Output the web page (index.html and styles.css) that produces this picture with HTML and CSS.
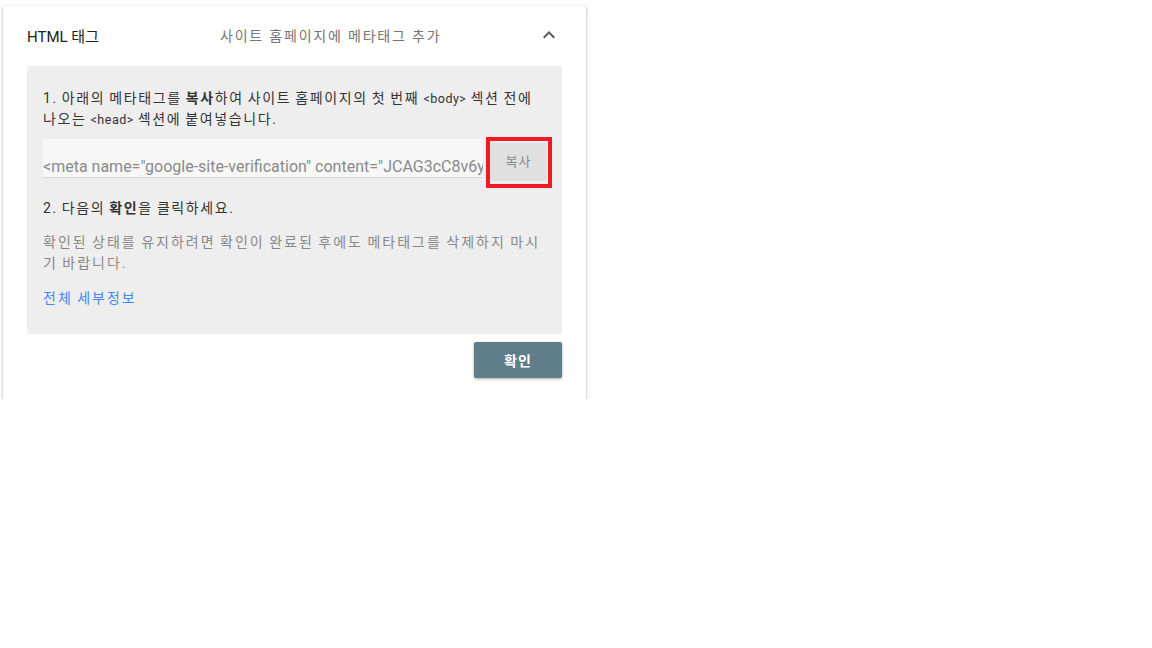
FILE: index.html
```html
<!DOCTYPE html>
<html lang="ko">
<head>
    <meta charset="UTF-8">
    <meta name="viewport" content="width=device-width, initial-scale=1.0">
    <title>HTML 태그</title>
    <link rel="stylesheet" href="styles.css">
</head>
<body>
    <div class="card">
        <div class="card-header">
            <span class="card-title">HTML 태그</span>
            <span class="card-subtitle">사이트 홈페이지에 메타태그 추가</span>
            <svg class="chevron" width="24" height="24" viewBox="0 0 24 24">
                <path d="M7.41 15.41L12 10.83l4.59 4.58L18 14l-6-6-6 6z" fill="#555"/>
            </svg>
        </div>

        <div class="steps">
            <p class="step">1. 아래의 메타태그를 <b>복사</b>하여 사이트 홈페이지의 첫 번째 <code>&lt;body&gt;</code> 섹션 전에<br>나오는 <code>&lt;head&gt;</code> 섹션에 붙여넣습니다.</p>

            <div class="copy-row">
                <div class="meta-field">&lt;meta name="google-site-verification" content="JCAG3cC8v6yQk2mXpL0tVbNq9rW" /&gt;</div>
                <span class="mark">
                    <button class="copy-btn">복사</button>
                </span>
            </div>

            <p class="step">2. 다음의 <b>확인</b>을 클릭하세요.</p>
            <p class="note">확인된 상태를 유지하려면 확인이 완료된 후에도 메타태그를 삭제하지 마시<br>기 바랍니다.</p>
            <a class="details" href="#">전체 세부정보</a>
        </div>

        <div class="actions">
            <button class="confirm-btn">확인</button>
        </div>
    </div>
</body>
</html>
```

FILE: styles.css
```css
body {
    margin: 0;
    background: #fff;
    font-family: Roboto, "Noto Sans CJK KR", sans-serif;
    color: #212121;
}

.card {
    width: 583px;
    margin: 6px 0 0 3px;
    background: #fff;
    box-shadow: 0 1px 3px rgba(0, 0, 0, 0.35);
    padding-bottom: 21px;
}

.card-header {
    height: 58px;
    margin-bottom: 2px;
    display: flex;
    align-items: center;
    padding: 0 25px 0 24px;
}

.card-title {
    width: 193px;
    font-size: 15px;
    color: #212121;
}

.card-subtitle {
    flex: 1;
    font-size: 14px;
    letter-spacing: 1.8px;
    color: #757575;
}

.chevron { display: block; }

.steps {
    margin: 0 24px;
    background: #eeeeee;
    padding: 22px 16px 26px;
    letter-spacing: 1.6px;
    word-spacing: -1px;
    white-space: nowrap;
}

.step {
    margin: 0;
    font-size: 14px;
    line-height: 20px;
    color: #333;
}

.step code {
    font-family: Roboto, sans-serif;
    font-size: 12.5px;
    letter-spacing: 0.5px;
}

.copy-row {
    display: flex;
    align-items: flex-start;
    gap: 3px;
    margin: 7px -6px 10px 0;
    letter-spacing: 0;
    word-spacing: 0;
}

.meta-field {
    flex: 0 0 440px;
    height: 39px;
    margin-top: 2px;
    box-sizing: border-box;
    background: #f7f7f7;
    border-bottom: 1px solid #d6d6d6;
    padding: 18px 0 0;
    font-size: 16px;
    line-height: 20px;
    color: #8a8a8a;
    overflow: hidden;
}

.mark {
    flex: 0 0 66px;
    box-sizing: border-box;
    border: 4px solid #ed1c24;
    padding: 2px 1px 3px 0;
}

.copy-btn {
    display: block;
    width: 57px;
    height: 38px;
    border: none;
    border-radius: 2px;
    background: #e0e0e0;
    color: #8a8a8a;
    font-family: inherit;
    font-size: 13px;
    letter-spacing: 1px;
    padding: 0 0 4px;
}

.note {
    margin: 14px 0 0;
    font-size: 14px;
    line-height: 21px;
    letter-spacing: 2px;
    color: #888;
}

.details {
    display: block;
    margin-top: 14px;
    font-size: 14px;
    line-height: 20px;
    letter-spacing: 2px;
    color: #4285f4;
    text-decoration: none;
}

.actions {
    display: flex;
    justify-content: flex-end;
    padding: 8px 24px 0;
}

.confirm-btn {
    width: 88px;
    height: 36px;
    border: none;
    border-radius: 2px;
    background: #607d8b;
    color: #fff;
    font-family: inherit;
    font-size: 14px;
    font-weight: 700;
    letter-spacing: 1px;
    box-shadow: 0 1px 3px rgba(0, 0, 0, 0.35);
}
```
